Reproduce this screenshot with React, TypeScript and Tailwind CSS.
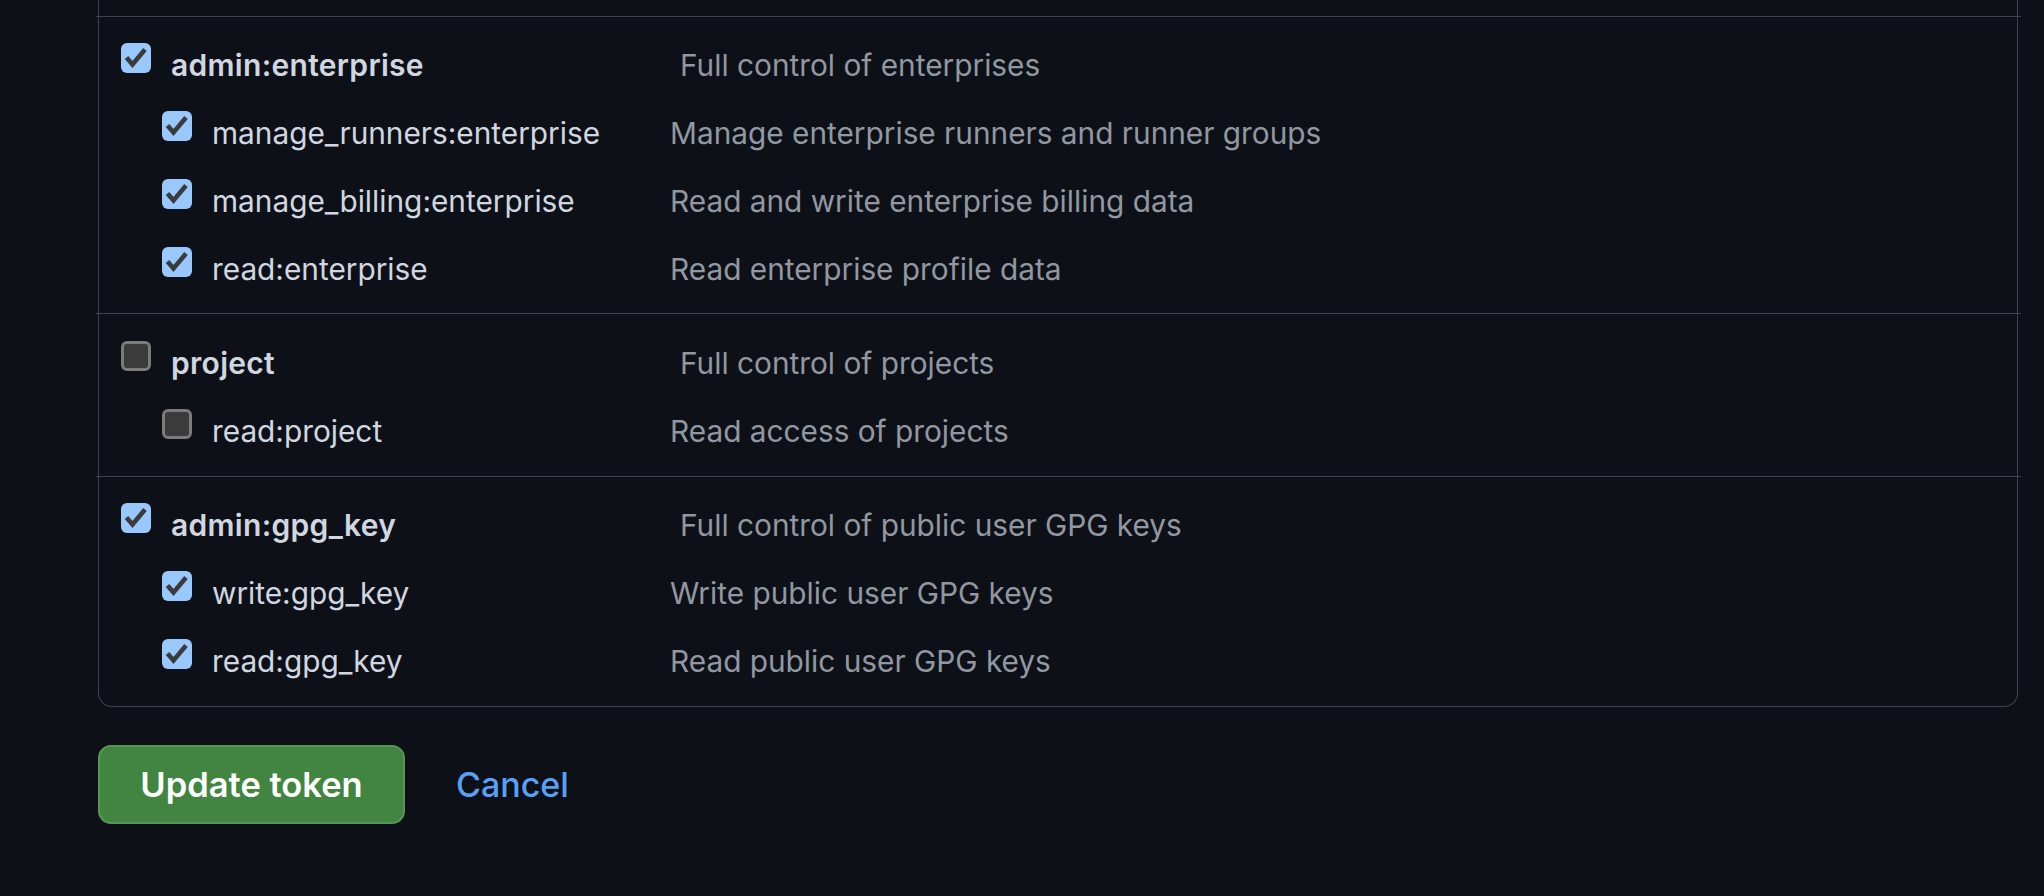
import React from "react";

type Scope = { name: string; description: string; checked: boolean };
type Group = { parent: Scope; children: Scope[] };

const GROUPS: Group[] = [
  {
    parent: { name: "admin:enterprise", description: "Full control of enterprises", checked: true },
    children: [
      { name: "manage_runners:enterprise", description: "Manage enterprise runners and runner groups", checked: true },
      { name: "manage_billing:enterprise", description: "Read and write enterprise billing data", checked: true },
      { name: "read:enterprise", description: "Read enterprise profile data", checked: true },
    ],
  },
  {
    parent: { name: "project", description: "Full control of projects", checked: false },
    children: [{ name: "read:project", description: "Read access of projects", checked: false }],
  },
  {
    parent: { name: "admin:gpg_key", description: "Full control of public user GPG keys", checked: true },
    children: [
      { name: "write:gpg_key", description: "Write public user GPG keys", checked: true },
      { name: "read:gpg_key", description: "Read public user GPG keys", checked: true },
    ],
  },
];

function Checkbox({ checked }: { checked: boolean }) {
  if (!checked) {
    return (
      <div className="self-start mt-[9px] w-[30px] h-[30px] shrink-0 rounded-[6px] bg-[#3b3b3b] border-[3px] border-[#7c7c7c]" />
    );
  }
  return (
    <div className="self-start mt-[9px] w-[30px] h-[30px] shrink-0 rounded-[6px] bg-[#99c8ff] flex items-center justify-center">
      <svg width="30" height="30" viewBox="0 0 30 30">
        <polyline
          points="5.5,14.5 11.5,21.5 24,6.5"
          fill="none"
          stroke="#3b3b3b"
          strokeWidth="4.6"
        />
      </svg>
    </div>
  );
}

function Separator() {
  return <div className="h-px bg-[#3d444d] ml-[-3px] mr-[-4px]" />;
}

export default function App() {
  return (
    <div
      className="min-h-screen w-full bg-[#0d1117] text-[#d1d7e0]"
      style={{ fontFamily: "Inter, 'Noto Sans', sans-serif" }}
    >
      <div className="ml-[98px] w-[1920px] border-x border-b border-[#3d444d] rounded-b-[14px]">
        {/* tail of previous section */}
        <div className="h-[16px]" />
        {GROUPS.map((group, i) => (
          <div key={group.parent.name}>
            <Separator />
            <div className={i === 1 ? "pt-[13px] pb-[13px]" : i === 0 ? "pt-[12px] pb-[12px]" : "pt-[12px] pb-[13px]"}>
              <div className="h-[68px] pt-[5px] flex items-center">
                <div className="w-[581px] pl-[22px] h-full flex items-center gap-[20px]">
                  <Checkbox checked={group.parent.checked} />
                  <span className="text-[30px] font-semibold tracking-[0.3px]">{group.parent.name}</span>
                </div>
                <span className="text-[29.8px] text-[#9198a1]">{group.parent.description}</span>
              </div>
              {group.children.map((child) => (
                <div key={child.name} className="h-[68px] pt-[5px] flex items-center">
                  <div className="w-[571px] pl-[63px] h-full flex items-center gap-[20px]">
                    <Checkbox checked={child.checked} />
                    <span className="text-[29.8px]">{child.name}</span>
                  </div>
                  <span className="text-[29.8px] text-[#9198a1]">{child.description}</span>
                </div>
              ))}
            </div>
          </div>
        ))}
      </div>

      <div className="ml-[98px] mt-[38px] flex items-center">
        <button className="w-[307px] h-[79px] rounded-[13px] bg-[#428541] border-2 border-[#579656] text-white text-[34.5px] font-semibold flex items-center justify-center">
          Update token
        </button>
        <a className="ml-[51px] text-[34px] text-[#58a0f6] font-medium">Cancel</a>
      </div>
    </div>
  );
}
